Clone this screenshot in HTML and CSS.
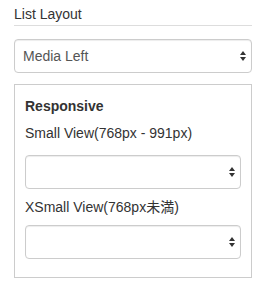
FILE: index.html
```html
<!DOCTYPE html>
<html lang="en">
<head>
  <meta charset="UTF-8">
  <title>List Layout</title>
  <link rel="stylesheet" href="styles.css">
</head>
<body>

<div class="section-title">List Layout</div>

<div class="select-wrap first">
  <select class="form-select">
    <option>Media Left</option>
    <option>Media Right</option>
  </select>
  <svg class="arrows" width="6" height="10" viewBox="0 0 6 10"><path d="M3 0 L6 4 L0 4 Z M0 6 L6 6 L3 10 Z" fill="#333"/></svg>
</div>

<div class="panel">
  <div class="panel-title">Responsive</div>

  <label class="field-label small">Small View(768px - 991px)</label>
  <div class="select-wrap">
    <select class="form-select">
      <option></option>
    </select>
    <svg class="arrows" width="6" height="10" viewBox="0 0 6 10"><path d="M3 0 L6 4 L0 4 Z M0 6 L6 6 L3 10 Z" fill="#333"/></svg>
  </div>

  <label class="field-label xsmall">XSmall View(768px未満)</label>
  <div class="select-wrap">
    <select class="form-select">
      <option></option>
    </select>
    <svg class="arrows" width="6" height="10" viewBox="0 0 6 10"><path d="M3 0 L6 4 L0 4 Z M0 6 L6 6 L3 10 Z" fill="#333"/></svg>
  </div>
</div>

</body>
</html>
```

FILE: styles.css
```css
body {
  margin: 0;
  padding: 4px 16px 0 14px;
  background: #fff;
  color: #333;
  font-family: "Liberation Sans", Arial, "Noto Sans CJK JP", sans-serif;
  font-size: 14px;
  line-height: 20px;
}
.section-title {
  padding-bottom: 1px;
  border-bottom: 1px solid #ddd;
}
.select-wrap {
  position: relative;
}
.select-wrap.first {
  margin-top: 13px;
}
.form-select {
  display: block;
  width: 100%;
  height: 34px;
  margin: 0;
  padding: 0 20px 0 8px;
  border: 1px solid #ccc;
  border-radius: 4px;
  background: #fff;
  box-shadow: inset 0 1px 1px rgba(0, 0, 0, .075);
  color: #555;
  font-family: inherit;
  font-size: 14px;
  appearance: none;
  -webkit-appearance: none;
}
.arrows {
  position: absolute;
  right: 6px;
  top: 12px;
  pointer-events: none;
}
.panel {
  margin-top: 11px;
  padding: 11px 10px 18px 10px;
  border: 1px solid #ccc;
}
.panel-title {
  font-weight: bold;
}
.field-label {
  display: block;
}
.field-label.small {
  margin-top: 7px;
  margin-bottom: 12px;
}
.field-label.xsmall {
  margin-top: 8px;
  margin-bottom: 8px;
}
```
